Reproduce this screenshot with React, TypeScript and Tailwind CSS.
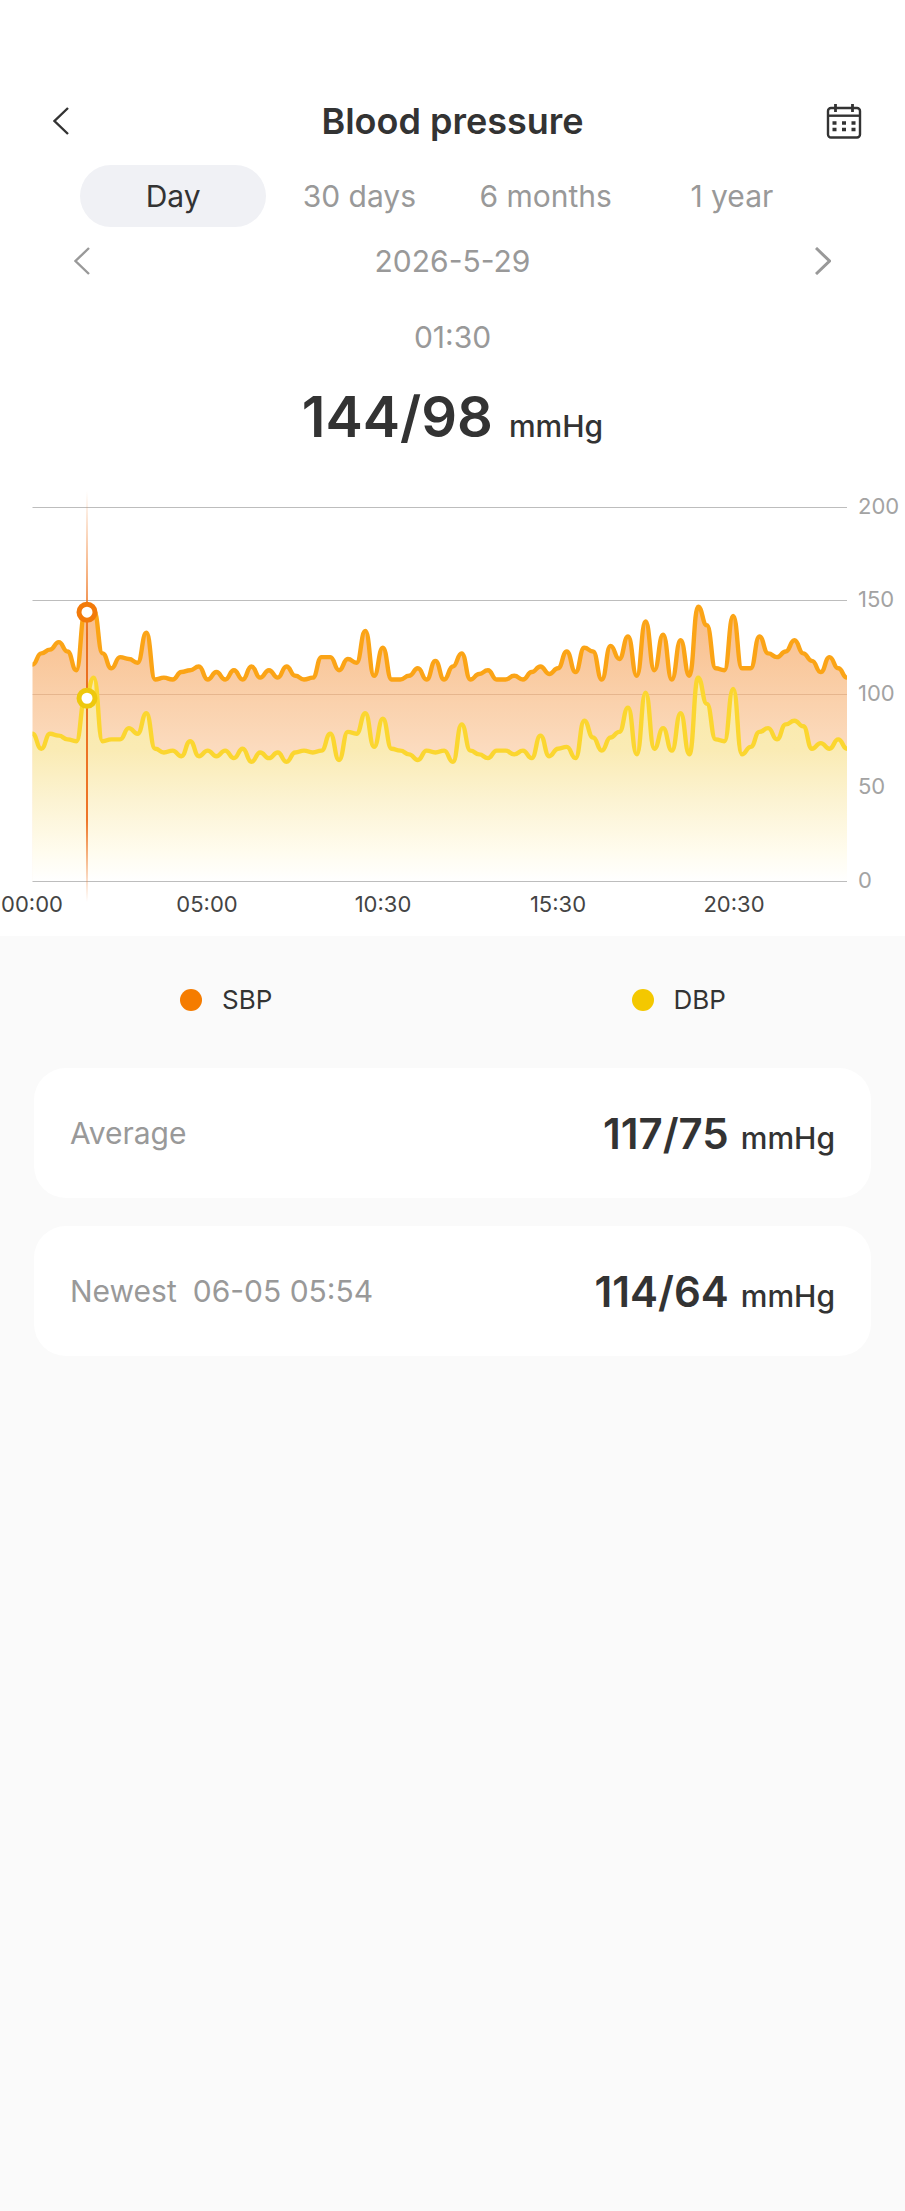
const SBP = [
  116, 122, 124, 128, 123, 113, 144, 145, 122, 114, 120, 119, 117, 133, 108, 109, 108, 112, 113, 115, 108, 112, 108, 113,
  108, 115, 109, 113, 109, 115, 110, 108, 109, 120, 120, 113, 119, 117, 134, 110, 125, 108, 108, 110, 114, 108, 118, 108,
  115, 122, 108, 111, 113, 108, 108, 110, 108, 112, 115, 111, 114, 123, 112, 125, 123, 108, 126, 119, 131, 110, 139, 113,
  132, 108, 129, 110, 147, 137, 114, 113, 142, 114, 114, 131, 122, 120, 123, 129, 122, 118, 112, 120, 114, 109,
];

const DBP = [
  79, 71, 79, 78, 76, 75, 98, 109, 75, 76, 76, 82, 79, 90, 71, 69, 70, 67, 75, 67, 70, 67, 70, 66,
  71, 64, 69, 66, 69, 64, 69, 70, 69, 70, 79, 65, 80, 79, 90, 72, 87, 71, 70, 68, 65, 70, 69, 70,
  64, 84, 70, 68, 66, 70, 70, 68, 70, 66, 78, 67, 71, 72, 66, 86, 77, 70, 77, 80, 93, 68, 101, 71,
  82, 70, 90, 68, 109, 95, 76, 75, 103, 68, 72, 80, 82, 76, 84, 86, 83, 71, 74, 71, 76, 71,
];

const tabs = ["Day", "30 days", "6 months", "1 year"];

const yTicks = [200, 150, 100, 50, 0];

const xTicks = [
  { label: "00:00", x: 32 },
  { label: "05:00", x: 207 },
  { label: "10:30", x: 383 },
  { label: "15:30", x: 558 },
  { label: "20:30", x: 734 },
];

const legend = [
  { label: "SBP", dot: "bg-[#f57c00]" },
  { label: "DBP", dot: "bg-[#f4c800]" },
];

const stats = [
  { label: "Average", time: "", value: "117/75" },
  { label: "Newest", time: "06-05 05:54", value: "114/64" },
];

// Plot area, in viewBox units
const LEFT = 32.5;
const RIGHT = 847;
const BASE = 402.5;
const UNIT = 1.87;
const MARKER_X = 87;

const px = (i: number) => LEFT + (i * (RIGHT - LEFT)) / (SBP.length - 1);
const py = (v: number) => BASE - v * UNIT;

function curve(values: number[]) {
  return values
    .map((v, i) => {
      const x = px(i);
      const y = py(v);
      if (i === 0) return `M${x} ${y}`;
      const mid = (px(i - 1) + x) / 2;
      return `C${mid} ${py(values[i - 1])} ${mid} ${y} ${x} ${y}`;
    })
    .join(" ");
}

const sbpLine = curve(SBP);
const dbpLine = curve(DBP);
const close = `L${RIGHT} ${BASE} L${LEFT} ${BASE} Z`;

function Chevron({ direction, className }: { direction: "left" | "right"; className: string }) {
  return (
    <svg viewBox="0 0 16 28" fill="none" stroke="currentColor" className={className} aria-hidden="true">
      <path d={direction === "left" ? "M15 1 L1.5 14 L15 27" : "M1 1 L14.5 14 L1 27"} />
    </svg>
  );
}

function CalendarIcon() {
  return (
    <svg viewBox="0 0 36 36" fill="none" stroke="currentColor" strokeWidth="2.4" className="size-9" aria-hidden="true">
      <rect x="2" y="5" width="32" height="29.5" rx="3" />
      <path d="M2 12.7 H34" />
      <path d="M9.5 1 V9 M26.5 1 V9" strokeWidth="2.8" />
      <path d="M6.5 20 h4 M16 20 h4 M25.5 20 h4 M6.5 26.5 h4 M16 26.5 h4 M25.5 26.5 h4" strokeWidth="3.4" />
    </svg>
  );
}

function PressureChart() {
  return (
    <svg viewBox="0 0 905 457" className="block w-full" role="img" aria-label="Blood pressure">
      <defs>
        <linearGradient id="sbpFill" gradientUnits="userSpaceOnUse" x1="0" y1="128" x2="0" y2="440">
          <stop offset="0" stopColor="#f8bd88" />
          <stop offset="1" stopColor="#ffffff" />
        </linearGradient>
        <linearGradient id="dbpFill" gradientUnits="userSpaceOnUse" x1="0" y1="199" x2="0" y2={BASE}>
          <stop offset="0" stopColor="#f9e8a6" />
          <stop offset="0.35" stopColor="#faebb4" />
          <stop offset="0.6" stopColor="#fcf3d2" />
          <stop offset="0.85" stopColor="#fffcee" />
          <stop offset="1" stopColor="#ffffff" />
        </linearGradient>
        <linearGradient id="markerFill" x1="0" y1="0" x2="0" y2="1">
          <stop offset="0" stopColor="#f08030" stopOpacity="0" />
          <stop offset="0.2" stopColor="#f08030" stopOpacity="0.6" />
          <stop offset="0.35" stopColor="#ea6f1e" />
          <stop offset="0.8" stopColor="#ee7528" />
          <stop offset="1" stopColor="#f08030" stopOpacity="0" />
        </linearGradient>
      </defs>

      {/* Filled areas */}
      <path d={`${sbpLine} ${close}`} fill="url(#sbpFill)" />
      <path d={`${dbpLine} ${close}`} fill="url(#dbpFill)" />

      {/* Grid */}
      <path d={`M${LEFT} 28.5 H${RIGHT} M${LEFT} 121.5 H${RIGHT} M${LEFT} 402.5 H${RIGHT}`} stroke="#bdbdbd" strokeWidth="1" />
      <path d={`M${LEFT} 215.5 H${RIGHT}`} stroke="#c98e64" strokeOpacity="0.4" strokeWidth="1" />

      {/* Series */}
      <path d={sbpLine} fill="none" stroke="#fba416" strokeWidth="4.4" strokeLinejoin="round" />
      <path d={dbpLine} fill="none" stroke="#fbd630" strokeWidth="4.4" strokeLinejoin="round" />

      {/* Selected reading */}
      <rect x={MARKER_X - 1} y="12" width="2" height="411" fill="url(#markerFill)" />
      <circle cx={MARKER_X} cy={py(144)} r="8" fill="#ffffff" stroke="#f27a0a" strokeWidth="5" />
      <circle cx={MARKER_X} cy={py(98)} r="8" fill="#ffffff" stroke="#eec80c" strokeWidth="5" />

      {yTicks.map((tick) => (
        <text key={tick} x="858" y={py(tick) + 6} className="fill-[#a3a3a3] text-[22px]">
          {tick}
        </text>
      ))}
      {xTicks.map((tick) => (
        <text key={tick.label} x={tick.x} y="433" textAnchor="middle" className="fill-[#444444] text-[22px]">
          {tick.label}
        </text>
      ))}
    </svg>
  );
}

export default function App() {
  return (
    <div className="min-h-screen bg-[#fafafa] font-['Inter',sans-serif] text-[#333333]">
      <section className="bg-white pt-[92px]">
        <header className="flex items-center justify-between px-[43px]">
          <button type="button" aria-label="Back" className="flex h-[58px] w-9 items-center justify-center">
            <Chevron direction="left" className="h-7 w-4 stroke-[2.4px]" />
          </button>
          <h1 className="text-4xl font-semibold">Blood pressure</h1>
          <button type="button" aria-label="Calendar">
            <CalendarIcon />
          </button>
        </header>

        <nav className="mt-[15px] flex px-20">
          {tabs.map((tab, i) => (
            <button
              key={tab}
              type="button"
              aria-pressed={i === 0}
              className={
                i === 0
                  ? "h-[62px] flex-1 rounded-full bg-[#f0f1f5] text-[30px]"
                  : "h-[62px] flex-1 text-[30px] text-[#999999]"
              }
            >
              {tab}
            </button>
          ))}
        </nav>

        <div className="flex h-[68px] items-center justify-between px-[74px] text-[#999999]">
          <button type="button" aria-label="Previous day">
            <Chevron direction="left" className="h-7 w-4 stroke-[2.4px]" />
          </button>
          <span className="text-[30px]">2026-5-29</span>
          <button type="button" aria-label="Next day">
            <Chevron direction="right" className="h-7 w-4 stroke-[3px]" />
          </button>
        </div>

        <p className="mt-[22px] text-center text-[30px] leading-10 text-[#999999]">01:30</p>
        <p className="mt-6 mb-[25px] flex h-[73px] items-baseline justify-center gap-4">
          <span className="text-[56px] leading-[73px] font-semibold">144/98</span>
          <span className="text-[30px] font-medium">mmHg</span>
        </p>

        <PressureChart />
      </section>

      <div className="flex pt-11">
        {legend.map((item) => (
          <div key={item.label} className="flex flex-1 items-center justify-center gap-5">
            <span className={`size-[22px] rounded-full ${item.dot}`} />
            <span className="text-[26px] leading-10">{item.label}</span>
          </div>
        ))}
      </div>

      <div className="flex flex-col gap-7 px-[34px] pt-12">
        {stats.map((stat) => (
          <div key={stat.label} className="flex h-[130px] items-center justify-between rounded-[32px] bg-white px-9">
            <div className="flex gap-4 text-[30px] text-[#999999]">
              <span>{stat.label}</span>
              {stat.time && <span>{stat.time}</span>}
            </div>
            <div className="flex items-baseline gap-3">
              <span className="text-[42px] font-semibold">{stat.value}</span>
              <span className="text-[30px] font-medium">mmHg</span>
            </div>
          </div>
        ))}
      </div>
    </div>
  );
}
